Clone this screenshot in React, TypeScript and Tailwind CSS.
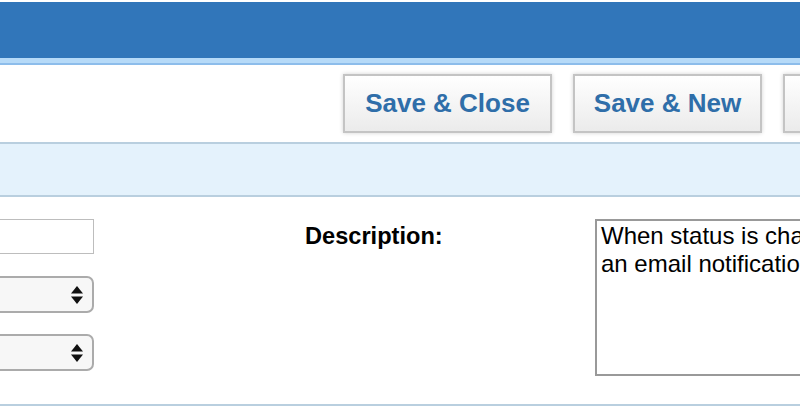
import React from 'react';

const font = { fontFamily: '"Liberation Sans", Arial, Helvetica, sans-serif' };

function ToolbarButton({ label, width }: { label: string; width: string }) {
  return (
    <button
      type="button"
      className={`${width} h-[59px] shrink-0 border-2 border-[#c4c4c4] bg-gradient-to-b from-white to-[#ebebeb] text-[26px] font-bold text-[#2f6ea9] shadow-[0_0_4px_rgba(0,0,0,0.18)]`}
    >
      {label}
    </button>
  );
}

function SelectBox() {
  return (
    <div className="-ml-[20px] flex h-[37px] w-[114px] items-center justify-end rounded-[7px] border-2 border-[#ababab] bg-[#f7f7f7] pr-[9px]">
      <svg width="12" height="18" viewBox="0 0 12 18" aria-hidden>
        <path d="M6 0 L12 7.5 L0 7.5 Z" fill="#111" />
        <path d="M0 10.5 L12 10.5 L6 18 Z" fill="#111" />
      </svg>
    </div>
  );
}

export default function App() {
  return (
    <div className="h-[408px] w-[800px] overflow-hidden bg-white" style={font}>
      <div className="h-[2px] bg-white" />
      <div className="h-[56px] bg-[#3176ba]" />
      <div className="h-[5px] bg-[#b6daf8]" />
      <div className="h-[2px] bg-[#8dbdeb]" />

      <div className="flex h-[77px] items-center gap-[21px] pl-[343px]">
        <ToolbarButton label="Save & Close" width="w-[209px]" />
        <ToolbarButton label="Save & New" width="w-[189px]" />
        <ToolbarButton label="Cancel" width="w-[150px]" />
      </div>

      <div className="h-[55px] border-y-2 border-[#b9cfdf] bg-[#e4f2fc]" />

      <div className="flex h-[209px] border-b-2 border-[#b9cfdf]">
        <div className="w-[94px] shrink-0 overflow-hidden pt-[22px]">
          <div className="-ml-[20px] h-[35px] w-[114px] border border-[#bdbdbd] bg-white" />
          <div className="mt-[22px] flex flex-col gap-[21px]">
            <SelectBox />
            <SelectBox />
          </div>
        </div>
        <div className="w-[211px] shrink-0" />
        <div className="w-[290px] shrink-0 pt-[25px] text-[23.6px] font-bold leading-[28px] text-black">
          Description:
        </div>
        <div className="flex-1 pt-[22px]">
          <div className="h-[157px] w-[260px] border-2 border-[#999999] px-[4px] pt-[1px] text-[24px] leading-[28px] text-black whitespace-nowrap">
            <div>When status is changed, send</div>
            <div>an email notification to the owner</div>
          </div>
        </div>
      </div>
    </div>
  );
}
